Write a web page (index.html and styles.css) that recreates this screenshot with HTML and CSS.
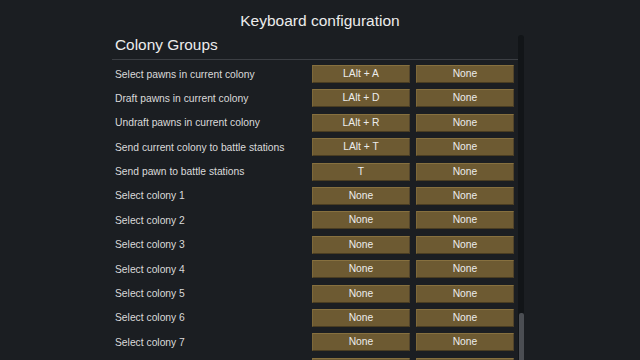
FILE: index.html
```html
<!DOCTYPE html>
<html>
<head>
  <title>Keyboard configuration</title>
  <link rel="stylesheet" href="styles.css">
</head>
<body>
  <h1 class="title">Keyboard configuration</h1>
  <div class="panel">
    <div class="list">
      <h2 class="group">Colony Groups</h2>
      <div class="rows">
        <div class="row"><span class="label">Select pawns in current colony</span><span class="key">LAlt + A</span><span class="key">None</span></div>
        <div class="row"><span class="label">Draft pawns in current colony</span><span class="key">LAlt + D</span><span class="key">None</span></div>
        <div class="row"><span class="label">Undraft pawns in current colony</span><span class="key">LAlt + R</span><span class="key">None</span></div>
        <div class="row"><span class="label">Send current colony to battle stations</span><span class="key">LAlt + T</span><span class="key">None</span></div>
        <div class="row"><span class="label">Send pawn to battle stations</span><span class="key">T</span><span class="key">None</span></div>
        <div class="row"><span class="label">Select colony 1</span><span class="key">None</span><span class="key">None</span></div>
        <div class="row"><span class="label">Select colony 2</span><span class="key">None</span><span class="key">None</span></div>
        <div class="row"><span class="label">Select colony 3</span><span class="key">None</span><span class="key">None</span></div>
        <div class="row"><span class="label">Select colony 4</span><span class="key">None</span><span class="key">None</span></div>
        <div class="row"><span class="label">Select colony 5</span><span class="key">None</span><span class="key">None</span></div>
        <div class="row"><span class="label">Select colony 6</span><span class="key">None</span><span class="key">None</span></div>
        <div class="row"><span class="label">Select colony 7</span><span class="key">None</span><span class="key">None</span></div>
        <div class="row"><span class="label">Select colony 8</span><span class="key">None</span><span class="key">None</span></div>
      </div>
    </div>
    <div class="scroll">
      <div class="thumb"></div>
    </div>
  </div>
</body>
</html>
```

FILE: styles.css
```css
html, body {
  height: 100%;
  overflow: hidden;
}

body {
  font-family: "Liberation Sans", Arial, sans-serif;
  background-color: #1b1e22;
  color: #e2e2e2;
  margin: 0;
}

.title {
  font-size: 15.5px;
  font-weight: normal;
  text-align: center;
  margin: 0;
  padding-top: 12px;
  height: 23px;
  line-height: 18px;
  color: #ececec;
}

.panel {
  display: flex;
  margin-left: 112px;
  width: 413px;
}

.list {
  width: 406px;
  flex-shrink: 0;
}

.group {
  font-size: 15.4px;
  font-weight: normal;
  margin: 0;
  padding: 0 0 0 3px;
  height: 24px;
  line-height: 20px;
  border-bottom: 1px solid #3c3f44;
  color: #ececec;
}

.rows {
  display: flex;
  flex-direction: column;
  gap: 6.4px;
  padding-top: 5px;
}

.row {
  display: flex;
  align-items: center;
  height: 18px;
  font-size: 10.3px;
}

.label {
  width: 200px;
  flex-shrink: 0;
  padding-left: 3px;
  box-sizing: border-box;
  color: #dadada;
}

.key {
  width: 98px;
  height: 18px;
  flex-shrink: 0;
  box-sizing: border-box;
  text-align: center;
  background-color: #6d5a32;
  border-top: 1px solid #86703f;
  border-left: 1px solid #7d6839;
  border-bottom: 1px solid #4a3d22;
  border-right: 1px solid #52442a;
  color: #ececec;
  margin-right: 6px;
  line-height: 16px;
}

.key:last-child {
  margin-right: 0;
}

.scroll {
  width: 6px;
  margin-left: 0;
  margin-top: 0;
  height: 340px;
  background-color: #121518;
  border-radius: 3px 3px 0 0;
  position: relative;
}

.thumb {
  position: absolute;
  left: 1px;
  right: 0;
  top: 278px;
  bottom: 0;
  background-color: #4b4e53;
  border-radius: 2px 2px 0 0;
}
```
